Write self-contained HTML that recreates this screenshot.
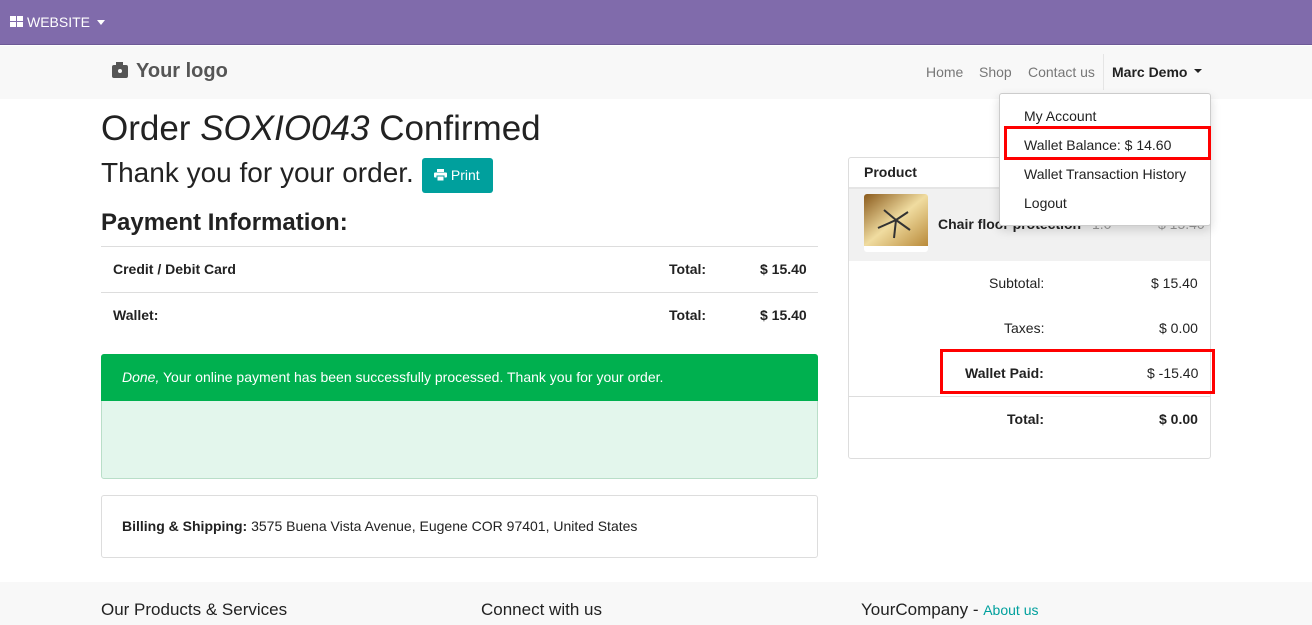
<!DOCTYPE html>
<html><head><meta charset="utf-8"><style>
*{box-sizing:border-box;margin:0;padding:0}
body{width:1312px;height:625px;overflow:hidden;font-family:"Liberation Sans",sans-serif;color:#222;background:#fff;position:relative;font-size:14px}
.a{position:absolute;white-space:nowrap}
.b{font-weight:bold}
</style></head><body>
<div class="a" style="left:0;top:0;width:1312px;height:45px;background:#806bab;border-bottom:1px solid #6d5a96"></div>
<div class="a" style="left:10px;top:16px;width:14px;height:12px">
<div class="a" style="left:0;top:0;width:6px;height:5px;background:#fff"></div><div class="a" style="left:7px;top:0;width:6px;height:5px;background:#fff"></div><div class="a" style="left:0;top:6px;width:6px;height:5px;background:#fff"></div><div class="a" style="left:7px;top:6px;width:6px;height:5px;background:#fff"></div></div>
<div class="a" style="left:27px;top:14px;color:#fff;font-size:14px">WEBSITE</div>
<div class="a" style="left:97px;top:20px;border:4px solid transparent;border-top:5px solid #fff;border-bottom:0"></div>
<div class="a" style="left:0;top:46px;width:1312px;height:53px;background:#f8f8f8"></div>
<div class="a" style="left:112px;top:65px;width:16px;height:13px;background:#555;border-radius:2px"></div>
<div class="a" style="left:116px;top:62px;width:7px;height:4px;background:#555"></div>
<div class="a" style="left:116px;top:67px;width:8px;height:8px;border-radius:50%;background:#f8f8f8;border:2px solid #555"></div>
<div class="a b" style="left:136px;top:60px;font-size:20px;color:#555">Your logo</div>
<div class="a" style="left:926px;top:64px;color:#777">Home</div>
<div class="a" style="left:979px;top:64px;color:#777">Shop</div>
<div class="a" style="left:1028px;top:64px;color:#777">Contact us</div>
<div class="a" style="left:1103px;top:54px;width:1px;height:36px;background:#e5e5e5"></div>
<div class="a b" style="left:1112px;top:64px;color:#222">Marc Demo</div>
<div class="a" style="left:1194px;top:69px;border:4px solid transparent;border-top:4px solid #222;border-bottom:0"></div>
<div class="a" style="left:101px;top:109px;font-size:35px;color:#222">Order <i>SOXIO043</i> Confirmed</div>
<div class="a" style="left:101px;top:157px;font-size:28px">Thank you for your order.</div>
<div class="a" style="left:422px;top:158px;width:71px;height:35px;background:#00a09d;border-radius:3px;color:#fff;font-size:14px;padding:9px 0 0 12px"><svg width="13" height="12" viewBox="0 0 13 12" style="vertical-align:-1px"><rect x="3" y="0" width="7" height="3" fill="#fff"/><rect x="0" y="3.5" width="13" height="5" rx="1" fill="#fff"/><rect x="3" y="7" width="7" height="5" fill="#fff" stroke="#00a09d" stroke-width="1"/></svg> Print</div>
<div class="a b" style="left:101px;top:209px;font-size:24px">Payment Information:</div>
<div class="a" style="left:101px;top:246px;width:717px;height:1px;background:#ddd"></div>
<div class="a" style="left:101px;top:292px;width:717px;height:1px;background:#ddd"></div>
<div class="a b" style="left:113px;top:261px">Credit / Debit Card</div>
<div class="a b" style="left:669px;top:261px">Total:</div>
<div class="a b" style="left:760px;top:261px">$ 15.40</div>
<div class="a b" style="left:113px;top:307px">Wallet:</div>
<div class="a b" style="left:669px;top:307px">Total:</div>
<div class="a b" style="left:760px;top:307px">$ 15.40</div>
<div class="a" style="left:101px;top:354px;width:717px;height:125px;background:#e3f6ec;border:1px solid #b9dec8;border-radius:3px"></div>
<div class="a" style="left:101px;top:354px;width:717px;height:47px;background:#00b04f;border-radius:3px 3px 0 0"></div>
<div class="a" style="left:122px;top:369px;color:#fff"><i>Done,</i> Your online payment has been successfully processed. Thank you for your order.</div>
<div class="a" style="left:101px;top:495px;width:717px;height:63px;border:1px solid #ddd;border-radius:3px"></div>
<div class="a" style="left:122px;top:518px"><b>Billing &amp; Shipping:</b> 3575 Buena Vista Avenue, Eugene COR 97401, United States</div>
<div class="a" style="left:848px;top:157px;width:363px;height:302px;border:1px solid #ddd;border-radius:3px"></div>
<div class="a" style="left:849px;top:187px;width:361px;height:2px;background:#e5e5e5"></div>
<div class="a b" style="left:864px;top:164px">Product</div>
<div class="a" style="left:849px;top:189px;width:361px;height:72px;background:#f1f1f1"></div>
<div class="a" style="left:864px;top:194px;width:64px;height:58px;background:#fff;border-radius:3px;overflow:hidden"><svg width="64" height="58"><defs><linearGradient id="g" x1="0" y1="0" x2="1" y2="1"><stop offset="0" stop-color="#8a5a1c"/><stop offset=".5" stop-color="#f0dca0"/><stop offset="1" stop-color="#b98a3a"/></linearGradient></defs><rect y="0" width="64" height="52" fill="url(#g)"/><g stroke="#333" stroke-width="2"><line x1="32" y1="26" x2="14" y2="34"/><line x1="32" y1="26" x2="46" y2="36"/><line x1="32" y1="26" x2="30" y2="44"/><line x1="32" y1="26" x2="44" y2="18"/><line x1="32" y1="26" x2="20" y2="16"/></g></svg></div>
<div class="a b" style="left:938px;top:216px">Chair floor protection</div>
<div class="a" style="left:1092px;top:216px;color:#999">1.0</div>
<div class="a" style="left:1158px;top:216px;color:#999">$ 15.40</div>
<div class="a" style="left:989px;top:275px">Subtotal:</div><div class="a" style="left:1151px;top:275px">$ 15.40</div>
<div class="a" style="left:1004px;top:320px">Taxes:</div><div class="a" style="left:1159px;top:320px">$ 0.00</div>
<div class="a b" style="left:965px;top:365px">Wallet Paid:</div><div class="a" style="left:1147px;top:365px">$ -15.40</div>
<div class="a" style="left:940px;top:349px;width:275px;height:45px;border:3px solid #f00"></div>
<div class="a" style="left:849px;top:396px;width:361px;height:1px;background:#ddd"></div>
<div class="a b" style="left:1007px;top:411px">Total:</div><div class="a b" style="left:1159px;top:411px">$ 0.00</div>
<div class="a" style="left:999px;top:93px;width:212px;height:133px;background:#fff;border:1px solid #ccc;border-radius:3px;box-shadow:0 4px 10px rgba(0,0,0,.15)"></div>
<div class="a" style="left:1024px;top:108px">My Account</div>
<div class="a" style="left:1024px;top:137px">Wallet Balance: $ 14.60</div>
<div class="a" style="left:1004px;top:126px;width:207px;height:34px;border:3px solid #f00"></div>
<div class="a" style="left:1024px;top:166px">Wallet Transaction History</div>
<div class="a" style="left:1024px;top:195px">Logout</div>
<div class="a" style="left:0;top:582px;width:1312px;height:43px;background:#f8f8f8"></div>
<div class="a" style="left:101px;top:600px;font-size:17px">Our Products &amp; Services</div>
<div class="a" style="left:481px;top:600px;font-size:17px">Connect with us</div>
<div class="a" style="left:861px;top:600px;font-size:17px">YourCompany - <span style="color:#00a09d;font-size:14px">About us</span></div>
</body></html>
